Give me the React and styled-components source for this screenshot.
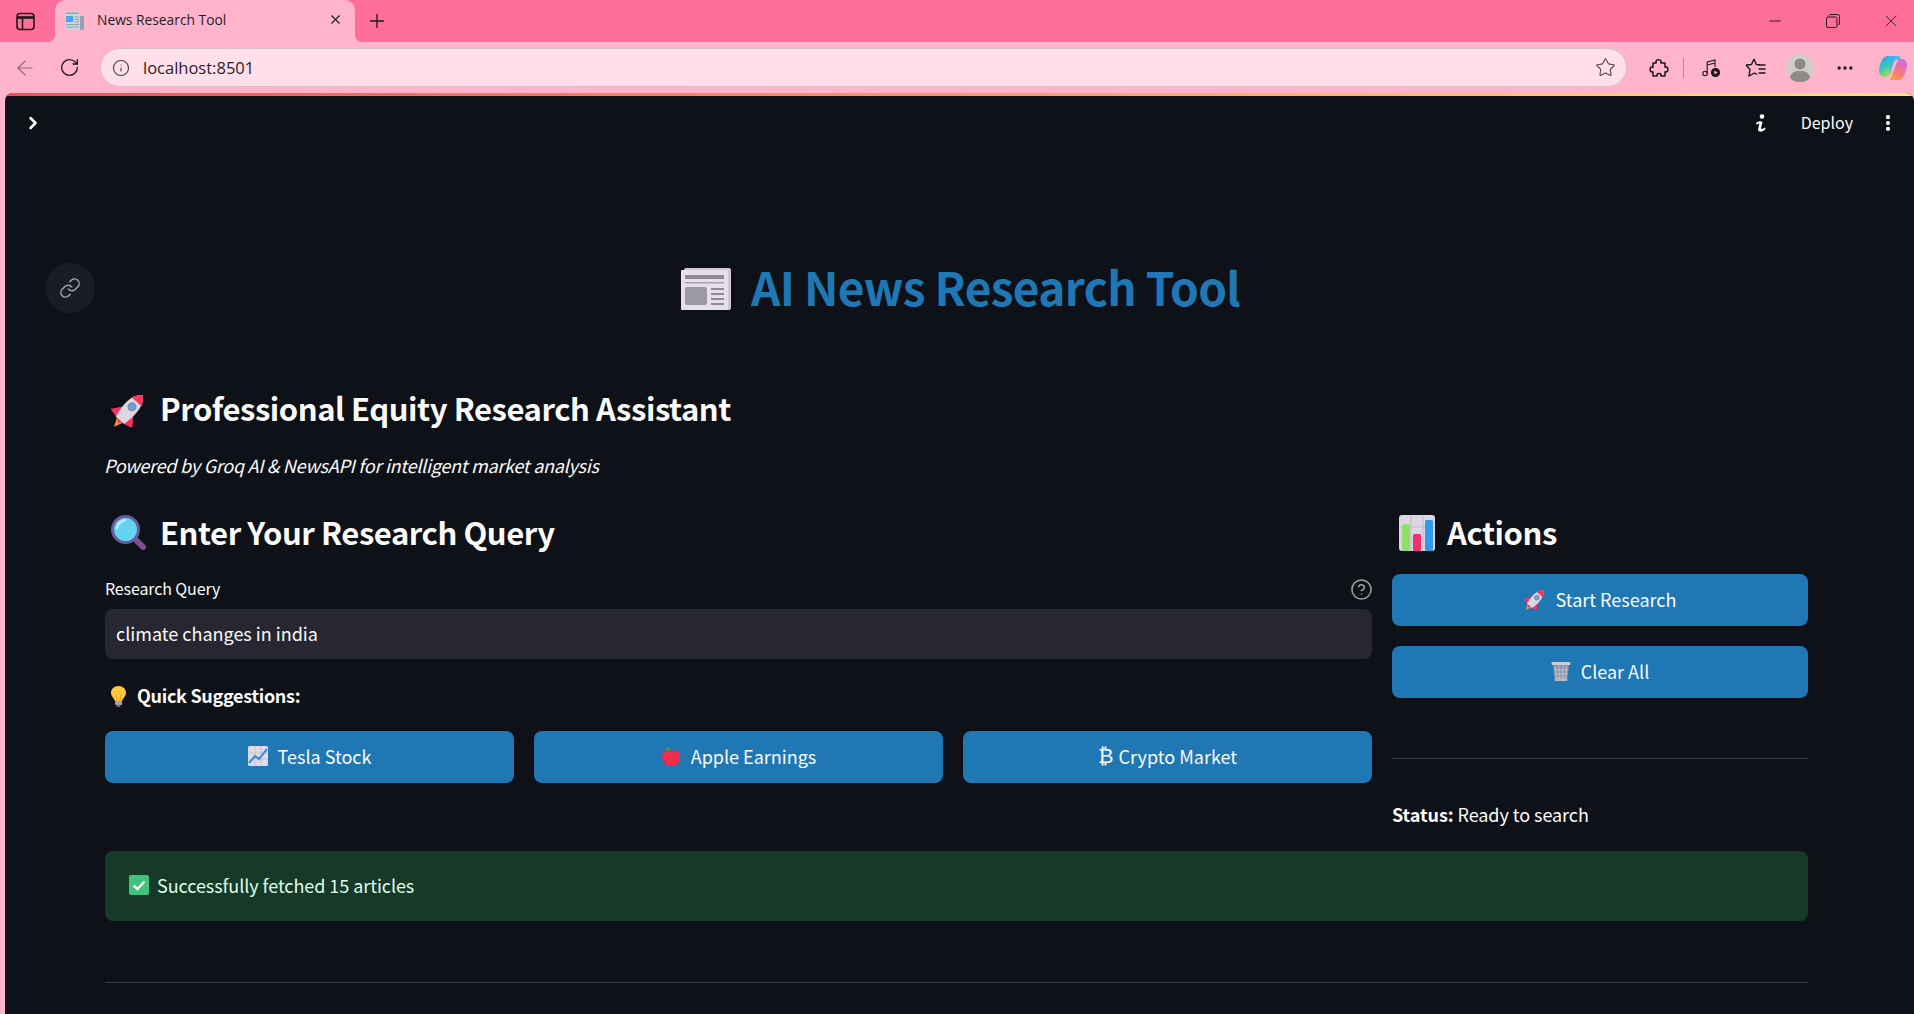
import React from "react";
import styled, { createGlobalStyle } from "styled-components";
import {
  ArrowLeft,
  ChevronRight,
  CircleHelp,
  EllipsisVertical,
  Info,
  Link,
  Minus,
  MoreHorizontal,
  Plus,
  RotateCw,
  Star,
  X,
} from "lucide-react";

const SANS = `"Noto Sans CJK SC", "Noto Sans", sans-serif`;
const CHROME = `"Open Sans", "Noto Sans", sans-serif`;

const GlobalStyle = createGlobalStyle`
  html, body { margin: 0; padding: 0; background: #ffb4cc; }
  body { font-family: ${SANS}; overflow: hidden; }
  * { box-sizing: border-box; }
`;

const Newspaper = () => (
  <svg width="50" height="42" viewBox="0 0 50 42">
    <rect x="3" y="0" width="47" height="42" rx="2" fill="#cfc7d8" />
    <rect x="0" y="2" width="47" height="40" rx="1" fill="#e6dfee" />
    <rect x="4" y="7" width="39" height="4" fill="#8f8a96" />
    <rect x="4" y="14" width="39" height="1.5" fill="#a7a2ad" />
    <rect x="4" y="19" width="22" height="18" rx="2" fill="#9d99a3" />
    {[20, 25, 30, 35].map((y) => (
      <rect key={y} x="30" y={y} width="13" height="2" fill="#8f8a96" />
    ))}
  </svg>
);

const Favicon = () => (
  <svg width="20" height="20" viewBox="0 0 20 20">
    <rect x="14" y="6" width="6" height="14" fill="#8fa3b2" />
    <rect x="1" y="1" width="15" height="19" fill="#c9d6de" />
    <rect x="2" y="2.500" width="13" height="1.500" fill="#8fa3b2" />
    <rect x="2" y="6" width="7" height="6" fill="#4ba3ee" />
    <path d="M10.500 7 H15 M10.500 9.500 H15 M10.500 12 H15 M2 14.500 H15 M2 17 H15" stroke="#8fa3b2" strokeWidth="1" />
  </svg>
);

const Rocket = ({ size = 36 }) => (
  <svg width={size} height={size} viewBox="2 1 32 32">
    <g transform="rotate(42 18 18)">
      <path d="M14 29 L18 38 L22 29Z" fill="#f5923a" />
      <path d="M12 19 L5 28 L13 30Z" fill="#f92f60" />
      <path d="M24 19 L31 28 L23 30Z" fill="#f92f60" />
      <path d="M18 0 C25 5 26 16 23 30 L13 30 C10 16 11 5 18 0Z" fill="#ddd6e1" />
      <path d="M18 0 C21 2 23 5 24 8 L12 8 C13 5 15 2 18 0Z" fill="#f8385f" />
      <circle cx="18" cy="14" r="4" fill="#8c8795" />
      <circle cx="18" cy="14" r="2.800" fill="#5aa7f2" />
      <path d="M15 30 H21 L18 33Z" fill="#f92f60" />
    </g>
  </svg>
);

const Magnifier = ({ size = 36 }) => (
  <svg width={size} height={size} viewBox="0 0 36 36">
    <path d="M23 23 L32 32" stroke="#7d4f8c" strokeWidth="6" strokeLinecap="round" />
    <circle cx="14.500" cy="14.500" r="13" fill="#62d4f0" stroke="#6b5aa0" strokeWidth="3" />
    <path d="M6 13 C7 8 10 6 14 5" stroke="#bdeefa" strokeWidth="2.500" fill="none" strokeLinecap="round" />
  </svg>
);

const BarChart = ({ size = 36 }) => (
  <svg width={size} height={size} viewBox="0 0 36 36">
    <rect width="36" height="36" rx="3" fill="#dcd6e2" />
    <path d="M0 12 H36 M0 24 H36 M12 0 V36 M24 0 V36" stroke="#c3bccb" strokeWidth="1" />
    <rect x="3" y="9" width="8" height="27" rx="1.500" fill="#8ee06a" />
    <rect x="14" y="19" width="8" height="17" rx="1.500" fill="#ee2f74" />
    <rect x="26" y="5" width="8" height="31" rx="1.500" fill="#2f9bea" />
  </svg>
);

const Bulb = () => (
  <svg width="17" height="21" viewBox="0 0 17 21">
    <path d="M8.500 0 C13 0 16 3 16 7 C16 10 13.500 11.500 12 15 H5 C3.500 11.500 1 10 1 7 C1 3 4 0 8.500 0Z" fill="#ffc83d" />
    <path d="M7 15 L6 8 M10 15 L11 8" stroke="#e39a1a" strokeWidth="0.800" />
    <rect x="5" y="15" width="7" height="4" rx="1" fill="#a7a2ad" />
    <rect x="6.500" y="19" width="4" height="2" rx="1" fill="#77727d" />
  </svg>
);

const TrendChart = () => (
  <svg width="20" height="20" viewBox="0 0 20 20">
    <rect width="20" height="20" rx="1.500" fill="#e1dbe7" />
    <path d="M0 7 H20 M0 13 H20 M7 0 V20 M13 0 V20" stroke="#c6bfce" strokeWidth="0.800" />
    <path d="M1 17 L7 10 L11 13 L19 3" stroke="#3f8fe0" strokeWidth="2.200" fill="none" />
  </svg>
);

const AppleIcon = () => (
  <svg width="20" height="20" viewBox="0 0 20 20">
    <path d="M10 6 C7 3 1 4 1 11 C1 16 5 20 7.500 20 C9 20 9 19.400 10 19.400 C11 19.400 11 20 12.500 20 C15 20 19 16 19 11 C19 4 13 3 10 6Z" fill="#ef2d4f" />
    <path d="M4 14 C5 17 7 19 9 19 C6 19 3 17 2 13Z" fill="#b32a7a" />
    <path d="M10 5 C9 3 7 1 4 1 C5 4 7 5 10 5Z" fill="#4f9a33" />
  </svg>
);

const Basket = () => (
  <svg width="20" height="20" viewBox="0 0 20 20">
    <path d="M2 3 H18 L16 20 H4Z" fill="#8d95a6" />
    <path d="M4 5 L6 19 M8 5 L8.500 19 M12 5 L11.500 19 M16 5 L14 19 M3 9 H17 M3.500 13 H16.500 M4 17 H16" stroke="#c3cad6" strokeWidth="0.800" />
    <rect x="0.500" y="1" width="19" height="3" rx="1" fill="#c8ccd6" />
    <rect x="3.500" y="18" width="13" height="2" rx="0.800" fill="#b4b9c4" />
  </svg>
);

const CheckBox = () => (
  <svg width="20" height="20" viewBox="0 0 20 20">
    <rect width="20" height="20" rx="2" fill="#43c27e" />
    <path d="M4.500 10.500 L8.500 14 L15.500 6.500" stroke="#f3f8f5" strokeWidth="2.400" fill="none" />
  </svg>
);

const WindowIcon = () => (
  <svg width="19" height="19" viewBox="0 0 19 19" fill="none" stroke="#1a1a1a" strokeWidth="1.600">
    <rect x="1" y="1.500" width="17" height="16" rx="3" />
    <path d="M1 5.500 H18" strokeWidth="2.600" />
    <path d="M6.500 5.500 V17.500" />
  </svg>
);

const Restore = () => (
  <svg width="14" height="14" viewBox="0 0 14 14" fill="none" stroke="#1a1a1a" strokeWidth="1">
    <rect x="0.500" y="3" width="10.500" height="10.500" rx="1.500" />
    <path d="M3 1.500 Q3.500 0.500 5 0.500 H11.500 Q13.500 0.500 13.500 2.500 V9 Q13.500 10.500 12.500 11" />
  </svg>
);

const Puzzle = () => (
  <svg width="20" height="20" viewBox="0 0 20 20" fill="none" stroke="#1a1a1a" strokeWidth="1.500" strokeLinejoin="round">
    <path d="M7 3.500 C7 1 12 1 12 3.500 C12 4.500 11.500 5 12 5 H16 V9 C16 9.500 16.500 9 17 9 C19.500 9 19.500 14 17 14 C16.500 14 16 13.500 16 14 V18 H12 C11.500 18 12 17.500 12 17 C12 15 8 15 8 17 C8 17.500 8.500 18 8 18 H4 V14 C4 13.500 3.500 14 3 14 C0.500 14 0.500 9 3 9 C3.500 9 4 9.500 4 9 V5 H7 C7.500 5 7 4.500 7 3.500Z" />
  </svg>
);

const MusicPlay = () => (
  <svg width="18" height="18" viewBox="0 0 18 18" fill="none" stroke="#1a1a1a" strokeWidth="1.100">
    <circle cx="3" cy="14.500" r="2.200" />
    <path d="M5.200 14.500 V3 L13 1 V8" />
    <path d="M5.200 6 L13 4" />
    <circle cx="13.500" cy="13.500" r="4" fill="#1a1a1a" />
    <path d="M12.300 11.500 L15.600 13.500 L12.300 15.500Z" fill="#ffb4cc" stroke="none" />
  </svg>
);

const Favorites = () => (
  <svg width="21" height="20" viewBox="0 0 21 20" fill="none" stroke="#1a1a1a" strokeWidth="1.400" strokeLinejoin="round">
    <path d="M9 1 L11.300 6.500 L15 6.800 M1 7 L6.500 6.500 L9 1 M1 7 L5 11.500 L4 18 L9.500 15 L12 16.500" />
    <path d="M13.500 7 H20.500 M13.500 11 H20.500 M13.500 15 H20.500" />
  </svg>
);

const Avatar = () => (
  <svg width="28" height="28" viewBox="0 0 28 28">
    <circle cx="14" cy="14" r="14" fill="#cfccc8" />
    <circle cx="14" cy="10" r="5.500" fill="#8d8a86" />
    <path d="M4 24 C5 18 9 17 14 17 C19 17 23 18 24 24 C21 27 18 28 14 28 C10 28 7 27 4 24Z" fill="#8d8a86" />
  </svg>
);

const Copilot = () => (
  <svg width="28" height="28" viewBox="0 0 28 28">
    <defs>
      <linearGradient id="cpA" x1="0" y1="0" x2="0.600" y2="1">
        <stop offset="0" stopColor="#2f9bf0" />
        <stop offset="0.500" stopColor="#34c6c0" />
        <stop offset="1" stopColor="#c6d83a" />
      </linearGradient>
      <linearGradient id="cpB" x1="0.800" y1="0" x2="0.300" y2="1">
        <stop offset="0" stopColor="#c86fe6" />
        <stop offset="0.550" stopColor="#f5748f" />
        <stop offset="1" stopColor="#ff9a3d" />
      </linearGradient>
    </defs>
    <path d="M8 2 H17 L11 20 C10 22 9 23 6 23 C2 23 0 20 0 17 C0 12 3 5 5 3.500 C6 2.500 7 2 8 2Z" fill="url(#cpA)" />
    <path d="M11 26 H20 C22 26 23 25 24 23 C26 19 28 15 28 11 C28 8 26 5 23 5 C20 5 19 6 18 8Z" fill="url(#cpB)" />
    <path d="M8 2 H19 C21 2 22 4 22 6 H17 C15 6 14.500 7 14 9 L11 20 C10 17 11 8 8 2Z" fill="#3ab4f0" opacity="0.800" />
  </svg>
);

// the streamlit status glyph next to Deploy
const StatusGlyph = () => (
  <svg width="12" height="19" viewBox="0 0 12 19" fill="#fff">
    <circle cx="7" cy="2.500" r="2.300" />
    <path d="M1 9 C3 7 6 6.500 7.500 8 L6 14 C6 15.500 8 15 10 13.500 L10.500 15 C8 18 3.500 19 3 15.500 L4.300 10 C3.500 9.500 2.500 10 1.500 10.500Z" />
  </svg>
);

const Window = styled.div`
  width: 1914px;
  height: 1014px;
  display: flex;
  flex-direction: column;
  overflow: hidden;
  background: #ffb4cc;
  color: #1a1a1a;
`;

const TabStrip = styled.div`
  height: 42px;
  flex: none;
  display: flex;
  align-items: stretch;
  background: #ff6d9b;
`;

const Slot = styled.div`
  flex: none;
  width: ${(p) => p.$w}px;
  display: flex;
  align-items: center;
  justify-content: center;
`;

const Tab = styled.div`
  position: relative;
  width: 300px;
  flex: none;
  display: flex;
  align-items: center;
  padding: 0 11px 3px 9px;
  background: #ffb4cc;
  border-radius: 10px 10px 0 0;
  font: 13.800px ${CHROME};
  color: #1f1f1f;

  &::before,
  &::after {
    content: "";
    position: absolute;
    bottom: 0;
    width: 8px;
    height: 8px;
  }
  &::before {
    left: -8px;
    background: radial-gradient(circle at 0 0, #ff6d9b 8px, #ffb4cc 8.500px);
  }
  &::after {
    right: -8px;
    background: radial-gradient(circle at 100% 0, #ff6d9b 8px, #ffb4cc 8.500px);
  }
`;

const TabTitle = styled.span`
  flex: 1;
  margin-left: 13px;
`;

const WindowControls = styled.div`
  margin-left: auto;
  display: flex;
`;

const Toolbar = styled.div`
  height: 51px;
  flex: none;
  display: flex;
  align-items: center;
  padding: 0 0 0 3px;
  background: #ffb4cc;
`;

const Address = styled.div`
  width: 1527px;
  height: 39px;
  flex: none;
  margin: 0 10px 0 8px;
  padding: 0 10px 0 11px;
  display: flex;
  align-items: center;
  background: #ffe0ea;
  border: 1px solid #dcbcc8;
  border-radius: 20px;
  font: 16.500px ${CHROME};
  color: #2b2226;
`;

const Url = styled.span`
  flex: 1;
  margin-left: 13px;
`;

const Separator = styled.div`
  width: 1px;
  height: 20px;
  margin: 0 3px 0 2px;
  background: #a88e98;
  flex: none;
`;

const CopilotSlot = styled.div`
  flex: none;
  width: 48px;
  padding-left: 14px;
  display: flex;
  align-items: center;
`;

const AppFrame = styled.div`
  position: relative;
  flex: 1;
  margin-left: 5px;
  background: #0e1117;
  border-radius: 8px 8px 0 0;
  overflow: hidden;
  color: #fafafa;
`;

const Decoration = styled.div`
  height: 3px;
  background: linear-gradient(90deg, #ff4b4b, #ffe56d);
`;

const AppHeader = styled.header`
  height: 54px;
  display: flex;
  align-items: center;
  padding: 0 16px 0 18px;
`;

const DeployGroup = styled.div`
  margin-left: auto;
  display: flex;
  align-items: center;
`;

const DeployLabel = styled.span`
  font-size: 16px;
  font-weight: 400;
  padding-bottom: 2px;
  margin: 0 25px 0 34px;
`;

const Main = styled.main`
  padding: 109px 106px 0 100px;
`;

const Title = styled.h1`
  position: relative;
  margin: 0;
  height: 60px;
  padding: 0 0 6px 8px;
  display: flex;
  align-items: center;
  justify-content: center;
  gap: 20px;
  font-size: 46px;
  letter-spacing: -0.670px;
  line-height: 54px;
  font-weight: 700;
  color: #1f77b4;

  > svg {
    transform: translateY(3px);
  }
`;

const AnchorButton = styled.a`
  position: absolute;
  left: -60px;
  top: 4px;
  width: 50px;
  height: 50px;
  display: flex;
  align-items: center;
  justify-content: center;
  border-radius: 50%;
  background: #191d24;
  color: #a3a8b0;
`;

const Heading = styled.h2`
  margin: ${(p) => p.$top || 0}px 0 0;
  height: 44px;
  display: flex;
  align-items: center;
  gap: ${(p) => p.$gap || 13}px;
  padding: 0 0 5px ${(p) => p.$indent || 6}px;
  font-size: 31px;
  letter-spacing: -0.440px;
  line-height: 39px;
  font-weight: 700;
  color: #fafafa;

  > svg {
    transform: translateY(1px);
  }
`;

const Tagline = styled.p`
  margin: 20px 0 0 -1px;
  font-size: 18px;
  letter-spacing: -0.260px;
  line-height: 26px;
  font-style: italic;
`;

const Columns = styled.div`
  margin-top: 34px;
  display: grid;
  grid-template-columns: 1fr 416px;
  gap: 20px;
`;

const Column = styled.div`
  display: flex;
  flex-direction: column;
`;

const LabelRow = styled.div`
  margin-top: 23px;
  height: 20px;
  display: flex;
  align-items: center;
  justify-content: space-between;
  font-size: 16px;
  letter-spacing: -0.120px;
  color: #fafafa;
`;

const LabelText = styled.span`
  padding-bottom: 2px;
`;

const HelpIcon = styled(CircleHelp)`
  color: #a0a1a5;
  margin: 0 -1px 0 0;
`;

const QueryInput = styled.div`
  margin-top: 10px;
  height: 50px;
  padding: 0 11px 2px;
  display: flex;
  align-items: center;
  background: #262730;
  border-radius: 8px;
  font-size: 18px;
  color: #fafafa;
`;

const Suggestions = styled.div`
  margin-top: 24px;
  height: 26px;
  padding-left: 5px;
  display: flex;
  align-items: center;
  gap: 10px;
  font-size: 18px;
  letter-spacing: -0.300px;
  font-weight: 700;
`;

const SuggestionsText = styled.span`
  padding-bottom: 2px;
`;

const ButtonRow = styled.div`
  margin-top: 22px;
  display: grid;
  grid-template-columns: repeat(3, 1fr);
  gap: 20px;
`;

const Button = styled.button`
  height: 52px;
  width: 100%;
  margin-top: ${(p) => p.$top || 0}px;
  padding: 0 0 2px;
  display: flex;
  align-items: center;
  justify-content: center;
  gap: 10px;
  border: none;
  border-radius: 8px;
  background: #1f77b4;
  color: #fafafa;
  font-family: ${SANS};
  font-size: 18px;
`;

const Bitcoin = styled.span`
  font-family: "DejaVu Sans", sans-serif;
  font-size: 21px;
  margin-right: -5px;
`;

const Rule = styled.hr`
  margin: ${(p) => p.$top}px 0 0;
  border: none;
  height: 1px;
  background: #3b3d44;
`;

const Status = styled.div`
  margin-top: 42px;
  font-size: 18px;
  letter-spacing: -0.060px;
  line-height: 26px;
  b {
    font-weight: 700;
  }
`;

const Success = styled.div`
  margin-top: 24px;
  height: 70px;
  padding: 0 24px 2px;
  display: flex;
  align-items: center;
  gap: 8px;
  border-radius: 8px;
  background: #173928;
  color: #dffde9;
  font-size: 18px;
  letter-spacing: -0.060px;
`;

const App = () => {
  return (
    <Window>
      <GlobalStyle />
      <TabStrip>
        <Slot $w={50}>
          <WindowIcon />
        </Slot>
        <Slot $w={5} />
        <Tab>
          <Favicon />
          <TabTitle>News Research Tool</TabTitle>
          <X size={15} strokeWidth={1.8} style={{ marginRight: 1 }} />
        </Tab>
        <Slot $w={44}>
          <Plus size={22} strokeWidth={1.4} />
        </Slot>
        <WindowControls>
          <Slot $w={46}>
            <Minus size={18} strokeWidth={1.2} />
          </Slot>
          <Slot $w={70}>
            <Restore />
          </Slot>
          <Slot $w={46}>
            <X size={20} strokeWidth={1} />
          </Slot>
        </WindowControls>
      </TabStrip>
      <Toolbar>
        <Slot $w={44}>
          <ArrowLeft size={24} strokeWidth={1.2} color="#8f6a78" />
        </Slot>
        <Slot $w={45}>
          <RotateCw size={21} strokeWidth={1.5} />
        </Slot>
        <Address>
          <Info size={18} strokeWidth={1.5} color="#4a4044" />
          <Url>localhost:8501</Url>
          <Star size={21} strokeWidth={1.3} color="#5a4a50" />
        </Address>
        <Slot $w={44}>
          <Puzzle />
        </Slot>
        <Separator />
        <Slot $w={48}>
          <MusicPlay />
        </Slot>
        <Slot $w={40}>
          <Favorites />
        </Slot>
        <Slot $w={50}>
          <Avatar />
        </Slot>
        <Slot $w={40}>
          <MoreHorizontal size={20} strokeWidth={2} />
        </Slot>
        <CopilotSlot>
          <Copilot />
        </CopilotSlot>
      </Toolbar>
      <AppFrame>
        <Decoration />
        <AppHeader>
          <ChevronRight size={20} strokeWidth={3} color="#fff" />
          <DeployGroup>
            <StatusGlyph />
            <DeployLabel>Deploy</DeployLabel>
            <EllipsisVertical size={20} strokeWidth={3} color="#fff" />
          </DeployGroup>
        </AppHeader>
        <Main>
          <Title>
            <AnchorButton>
              <Link size={22} strokeWidth={1.6} />
            </AnchorButton>
            <Newspaper />
            AI News Research Tool
          </Title>
          <Heading $top={69}>
            <Rocket />
            Professional Equity Research Assistant
          </Heading>
          <Tagline>Powered by Groq AI &amp; NewsAPI for intelligent market analysis</Tagline>
          <Columns>
            <Column>
              <Heading>
                <Magnifier />
                Enter Your Research Query
              </Heading>
              <LabelRow>
                <LabelText>Research Query</LabelText>
                <HelpIcon size={23} strokeWidth={1.6} />
              </LabelRow>
              <QueryInput>climate changes in india</QueryInput>
              <Suggestions>
                <Bulb />
                <SuggestionsText>Quick Suggestions:</SuggestionsText>
              </Suggestions>
              <ButtonRow>
                <Button>
                  <TrendChart />
                  Tesla Stock
                </Button>
                <Button>
                  <AppleIcon />
                  Apple Earnings
                </Button>
                <Button>
                  <Bitcoin>₿</Bitcoin>
                  Crypto Market
                </Button>
              </ButtonRow>
            </Column>
            <Column>
              <Heading $indent={7} $gap={12}>
                <BarChart />
                Actions
              </Heading>
              <Button $top={18}>
                <Rocket size={22} />
                Start Research
              </Button>
              <Button $top={20}>
                <Basket />
                Clear All
              </Button>
              <Rule $top={60} />
              <Status>
                <b>Status:</b> Ready to search
              </Status>
            </Column>
          </Columns>
          <Success>
            <CheckBox />
            Successfully fetched 15 articles
          </Success>
          <Rule $top={61} />
        </Main>
      </AppFrame>
    </Window>
  );
};

export default App;
